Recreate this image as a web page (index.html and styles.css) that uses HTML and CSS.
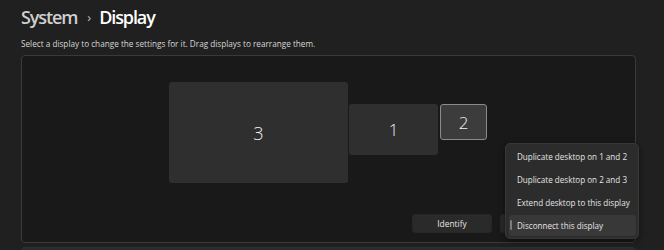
FILE: index.html
```html
<!DOCTYPE HTML>
<html>
<head>
<meta charset="UTF-8">
<title>Display</title>
<link rel="stylesheet" href="styles.css">
</head>

<body>
<div id="page">
	<h1 class="crumb"><span class="parent">System</span><span class="sep">&#8250;</span><span class="current">Display</span></h1>
	<p class="hint">Select a display to change the settings for it. Drag displays to rearrange them.</p>

	<div class="arrange">
		<div class="canvas">
			<div class="monitor m3">3</div>
			<div class="monitor m1">1</div>
			<div class="monitor m2 selected">2</div>
		</div>
		<div class="actions">
			<button class="btn">Identify</button>
			<button class="btn select" aria-label="Extend these displays"></button>
		</div>
	</div>
	<div class="next-card"></div>

	<ul class="flyout">
		<li>Duplicate desktop on 1 and 2</li>
		<li>Duplicate desktop on 2 and 3</li>
		<li>Extend desktop to this display</li>
		<li class="current">Disconnect this display</li>
	</ul>
</div>
</body>
</html>
```

FILE: styles.css
```css
html, body {margin:0; padding:0; background:#202020;}
body {font-family:"Open Sans", "Noto Sans", sans-serif; color:#fff; overflow:hidden;}
#page {position:relative; width:664px; height:250px; padding:0 28px 0 21px; box-sizing:border-box; overflow:hidden;}

.crumb {margin:0; padding-top:5px; height:29px; box-sizing:border-box; font-size:18px; line-height:24px; font-weight:600; letter-spacing:-1.1px; display:flex; align-items:baseline;}
.crumb .parent {color:#cfcfcf;}
.crumb .sep {color:#bdbdbd; font-size:13px; font-weight:400; margin:0 9px 0 10px; position:relative; top:-2px;}
.crumb .current {color:#fff;}

.hint {margin:8px 0 0; font-size:8.2px; line-height:14px; color:#d6d6d6;}

.arrange {margin-top:4px; height:188px; box-sizing:border-box; border:1px solid #3a3a3a; border-radius:4px; background:#191919; display:flex; flex-direction:column;}
.canvas {position:relative; height:158px;}
.monitor {position:absolute; display:flex; align-items:center; justify-content:center; background:#2f2f2f; border-radius:3px; color:#f2f2f2; font-size:18px; font-weight:300; box-sizing:border-box;}
.m3 {left:147px; top:26px; width:179px; height:101px;}
.m1 {left:327px; top:48px; width:89px; height:51px; font-size:17px;}
.m2 {left:418px; top:48px; width:47px; height:36px; font-size:17px;}
.monitor.selected {background:#3c3c3c; border:1px solid #8a8a8a;}

.actions {display:flex; justify-content:flex-end; gap:8px; padding:0 7px 9px;}
.btn {height:19px; width:80px; border:1px solid #262626; border-radius:3px; background:#2a2a2a; color:#e6e6e6; font-family:inherit; font-size:8.4px; padding:0;}
.btn.select {width:128px;}

.next-card {margin-top:4px; height:20px; border:1px solid #2e2e2e; border-radius:4px; background:#2b2b2b;}

.flyout {position:absolute; left:505px; top:143px; width:134px; margin:0; padding:2px 2px 2px 3px; box-sizing:border-box; list-style:none; background:#2c2c2c; border:1px solid #383838; border-radius:5px; box-shadow:0 2px 6px rgba(0,0,0,0.5); display:flex; flex-direction:column; gap:2px;}
.flyout li {position:relative; height:21px; line-height:21px; padding-left:8px; font-size:8.1px; color:#e4e4e4; border-radius:3px; white-space:nowrap;}
.flyout li.current {background:#383838;}
.flyout li.current::before {content:""; position:absolute; left:1px; top:5px; width:2px; height:10px; border-radius:1px; background:#7c7c7c;}
```
